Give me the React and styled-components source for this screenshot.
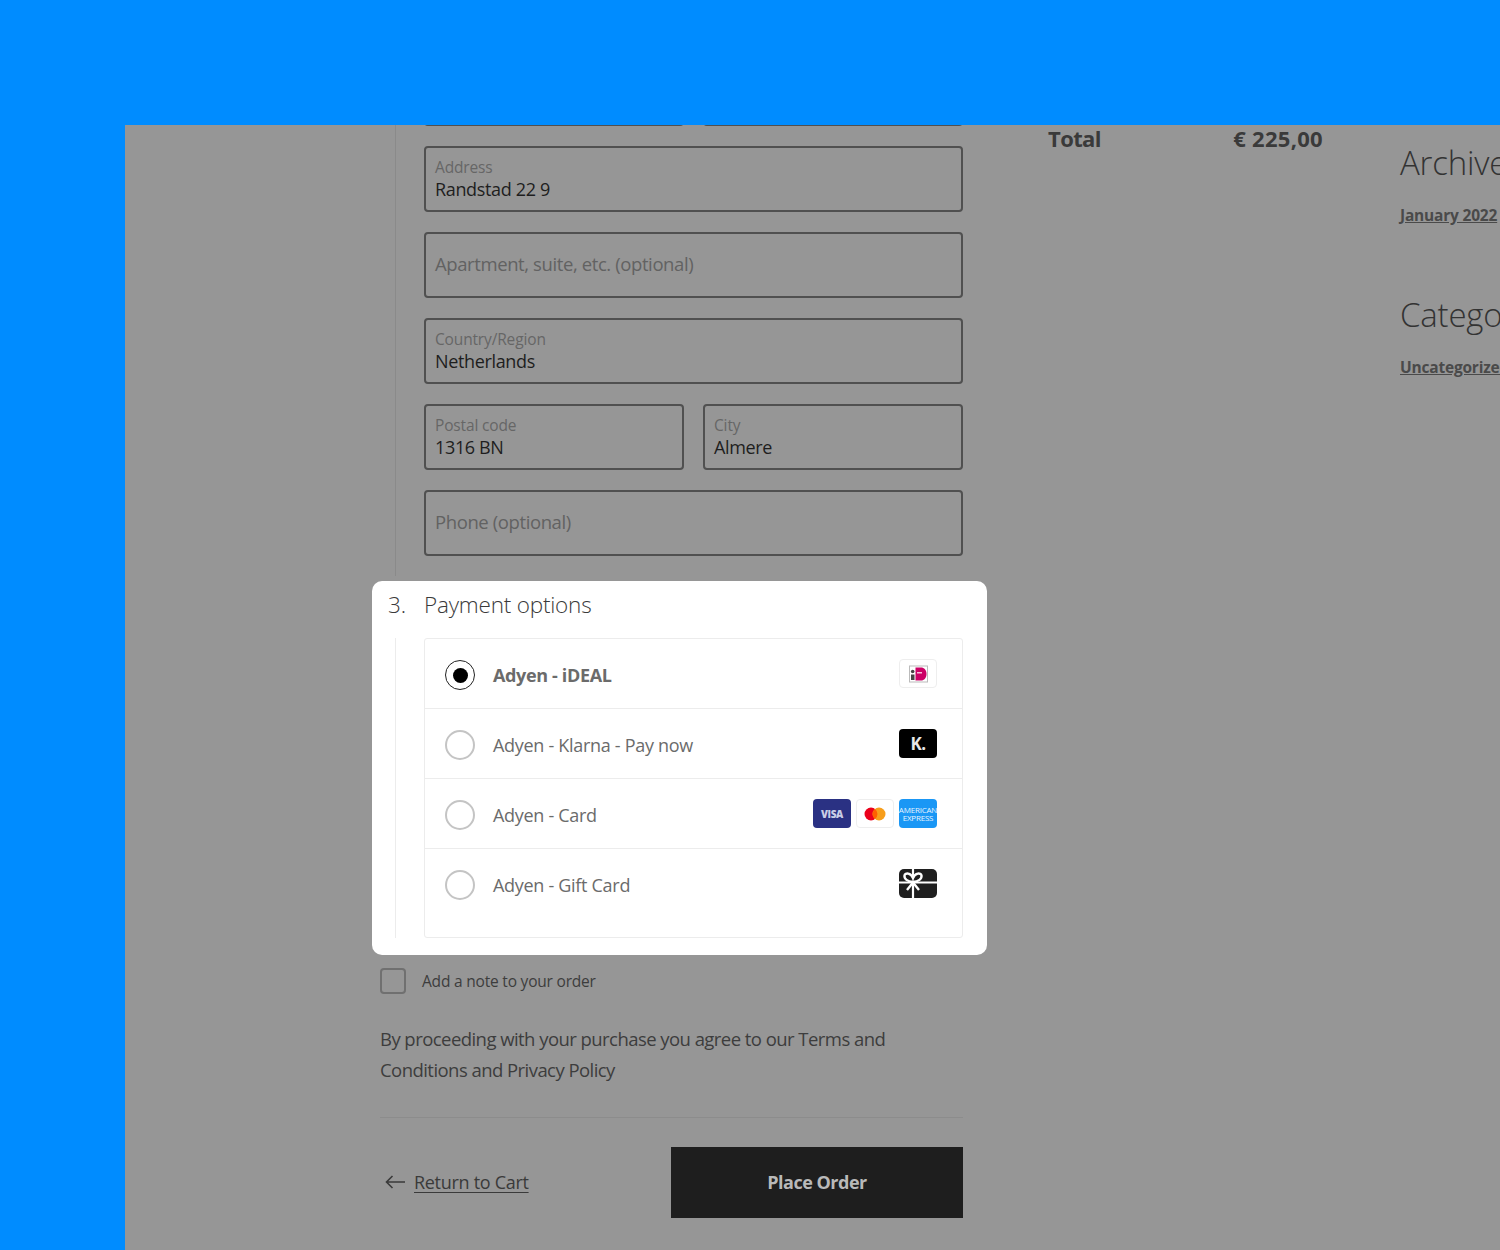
import React from 'react';
import styled, { createGlobalStyle } from 'styled-components';

const GlobalStyle = createGlobalStyle`
  html, body {
    margin: 0;
    padding: 0;
    height: 100%;
    overflow: hidden;
    background: #008cff;
    font-family: "Open Sans", "Noto Sans", sans-serif;
  }
`;

const Backdrop = styled.div`
  height: 1250px;
  padding: 125px 0 0 125px;
  box-sizing: border-box;
  overflow: hidden;
`;

const Sheet = styled.div`
  height: 1125px;
  background: #969696;
  display: flex;
  align-items: flex-start;
  padding-left: 255px;
  overflow: hidden;
`;

const Checkout = styled.div`
  width: 583px;
  flex: none;
  margin-top: -65px;
`;

const Fields = styled.div`
  margin-left: 15px;
  padding: 0 0 20px 28px;
  border-left: 1px solid #8a8a8a;
  display: flex;
  flex-direction: column;
  gap: 20px;
`;

const Row = styled.div`
  display: flex;
  gap: 19px;
`;

const Field = styled.div`
  flex: 1 0 66px;
  height: 66px;
  box-sizing: border-box;
  border: 2px solid #505050;
  border-radius: 4px;
  padding: 0 9px;
  display: flex;
  flex-direction: column;
  justify-content: center;
`;

const FieldLabel = styled.span`
  font-size: 15.5px;
  line-height: 21px;
  letter-spacing: -0.15px;
  color: #666;
`;

const FieldValue = styled.span`
  font-size: 18px;
  line-height: 23px;
  letter-spacing: -0.35px;
  color: #1e1e1e;
`;

const Placeholder = styled.span`
  margin-bottom: 4px;
  font-size: 18.5px;
  letter-spacing: -0.4px;
  color: #626262;
`;

const Panel = styled.section`
  margin: 5px -24px 0 -8px;
  height: 374px;
  box-sizing: border-box;
  padding-right: 24px;
  background: #fff;
  border-radius: 10px;
`;

const PanelHeading = styled.h2`
  margin: 0;
  height: 57px;
  padding: 0 0 11px 16px;
  box-sizing: border-box;
  display: flex;
  align-items: center;
  font-size: 22.5px;
  font-weight: 300;
  letter-spacing: -0.2px;
  color: #3a3a3a;
  span {
    width: 36px;
  }
`;

const PanelBody = styled.div`
  margin-left: 23px;
  padding-left: 28px;
  border-left: 1px solid #ececec;
`;

const Methods = styled.ul`
  list-style: none;
  margin: 0;
  padding: 0;
  border: 1px solid #ececec;
  border-radius: 3px;
`;

const Method = styled.li`
  height: ${p => (p.$last ? '88px' : '70px')};
  box-sizing: border-box;
  display: flex;
  align-items: flex-start;
  padding: 21px 25px 0 20px;
  border-bottom: ${p => (p.$last ? 'none' : '1px solid #ececec')};
`;

const Radio = styled.span`
  width: 30px;
  height: 30px;
  box-sizing: border-box;
  border-radius: 50%;
  border: ${p => (p.$checked ? '1.5px solid #222' : '2px solid #c4c4c4')};
  display: flex;
  align-items: center;
  justify-content: center;
  flex: none;
  &::after {
    content: '';
    display: ${p => (p.$checked ? 'block' : 'none')};
    width: 15px;
    height: 15px;
    border-radius: 50%;
    background: #000;
  }
`;

const MethodName = styled.span`
  margin-left: 18px;
  line-height: 30px;
  flex: 1;
  font-size: 18px;
  letter-spacing: ${p => (p.$active ? '-0.35px' : '-0.3px')};
  font-weight: ${p => (p.$active ? 700 : 400)};
  color: #6b6b6b;
`;

const Badges = styled.div`
  display: flex;
  gap: 5px;
  margin-top: -1px;
`;

const Badge = styled.span`
  width: 38px;
  height: 29px;
  box-sizing: border-box;
  border-radius: 4px;
  background: ${p => p.$bg || '#fff'};
  border: ${p => (p.$bg ? 'none' : '1px solid #eee')};
  color: #fff;
  display: flex;
  align-items: center;
  justify-content: center;
  overflow: hidden;
`;

const KlarnaMark = styled.span`
  font-size: 17px;
  font-weight: 700;
  letter-spacing: -0.5px;
  color: #e8e8e8;
`;

const VisaMark = styled.span`
  font-size: 10px;
  font-weight: 800;
  letter-spacing: -0.4px;
  color: #c9cde6;
`;

const AmexMark = styled.span`
  font-size: 8px;
  line-height: 8px;
  font-weight: 400;
  text-align: center;
  white-space: nowrap;
  letter-spacing: -0.2px;
  color: #e8f5ff;
`;

const NoteRow = styled.label`
  margin-top: 13px;
  display: flex;
  align-items: center;
  gap: 16px;
  font-size: 15.5px;
  letter-spacing: -0.2px;
  color: #3d3d3d;
`;

const Checkbox = styled.span`
  width: 26px;
  height: 26px;
  box-sizing: border-box;
  border: 2px solid #707070;
  border-radius: 4px;
  flex: none;
`;

const Terms = styled.p`
  margin: 29px 0 0;
  font-size: 18.5px;
  line-height: 31px;
  letter-spacing: -0.55px;
  color: #3d3d3d;
  padding-bottom: 32px;
  border-bottom: 1px solid #8c8c8c;
`;

const Actions = styled.div`
  margin-top: 29px;
  display: flex;
  align-items: center;
  justify-content: space-between;
`;

const BackLink = styled.a`
  display: flex;
  align-items: center;
  gap: 9px;
  margin: 0 0 2px 5px;
  font-size: 18px;
  letter-spacing: -0.3px;
  color: #3a3a3a;
  span {
    text-decoration: underline;
    text-underline-offset: 3px;
  }
`;

const PlaceOrder = styled.button`
  width: 292px;
  height: 71px;
  padding: 0 0 2px;
  border: none;
  background: #1e1e1e;
  color: #b9b9b9;
  font-family: inherit;
  font-size: 18px;
  font-weight: 700;
  letter-spacing: -0.5px;
`;

const Summary = styled.div`
  width: 275px;
  margin-left: 85px;
  flex: none;
  display: flex;
  justify-content: space-between;
  font-size: 22px;
  line-height: 26px;
  font-weight: 700;
  letter-spacing: -0.6px;
  color: #3a3a3a;
`;

const Amount = styled.span`
  letter-spacing: 0.3px;
`;

const Sidebar = styled.aside`
  margin-left: 77px;
  padding-top: 18px;
  flex: none;
  width: 300px;
  white-space: nowrap;
`;

const WidgetTitle = styled.h3`
  margin: 0;
  font-size: 33px;
  line-height: 40px;
  font-weight: 300;
  letter-spacing: -0.2px;
  color: #333;
`;

const WidgetLink = styled.a`
  display: block;
  margin: 22px 0 70px;
  font-size: 15.5px;
  line-height: 20px;
  font-weight: 700;
  letter-spacing: -0.2px;
  color: #4a4a4a;
  text-decoration: underline;
`;

const IdealIcon = () => (
  <svg width="19" height="18" viewBox="0 0 19 18">
    <rect x="0.5" y="1" width="18" height="16" fill="#fff" stroke="#bbb" strokeWidth="1" />
    <rect x="2" y="9.500" width="3.500" height="5.500" fill="#444" />
    <circle cx="3.700" cy="6.500" r="1.800" fill="#444" />
    <path d="M6.500 2.500h5.500c3.200 0 5.500 2.400 5.500 6.500s-2.300 6.500-5.500 6.500H6.500z" fill="#cc0066" />
    <path d="M8 7h5v1.500H8z" fill="#f7bcd9" />
  </svg>
);

const GiftIcon = () => (
  <svg width="38" height="29" viewBox="0 0 38 29">
    <rect width="38" height="29" rx="5" fill="#1f1f1f" />
    <path d="M0 13.500h38M14 0v29" stroke="#fff" strokeWidth="2.200" fill="none" />
    <path d="M14 13c-5.500-.5-9-3-8.500-6.500 .5-3 6.500-3 8.500 2.500 2-5.500 8-5.500 8.500-2.500 .5 3.500-3 6-8.500 6.500z" fill="#1f1f1f" stroke="#fff" strokeWidth="2.400" />
    <path d="M14 13.500l-6 7.500M14 13.500l6 7.500" stroke="#fff" strokeWidth="2.400" fill="none" />
  </svg>
);

const ArrowIcon = () => (
  <svg width="20" height="14" viewBox="0 0 20 14">
    <path d="M20 7H1.500M7.500 1L1.500 7l6 6" fill="none" stroke="#3a3a3a" strokeWidth="1.600" />
  </svg>
);

const MastercardIcon = () => (
  <svg width="22" height="14" viewBox="0 0 22 14">
    <circle cx="7" cy="7" r="6.500" fill="#eb001b" />
    <circle cx="15" cy="7" r="6.500" fill="#f79e1b" />
    <path d="M11 1.900a6.500 6.500 0 0 1 0 10.200a6.500 6.500 0 0 1 0-10.200z" fill="#ff5f00" />
  </svg>
);

const App = () => (
  <>
    <GlobalStyle />
    <Backdrop>
      <Sheet>
        <Checkout>
          <Fields>
            <Row>
              <Field />
              <Field />
            </Row>
            <Field>
              <FieldLabel>Address</FieldLabel>
              <FieldValue>Randstad 22 9</FieldValue>
            </Field>
            <Field>
              <Placeholder>Apartment, suite, etc. (optional)</Placeholder>
            </Field>
            <Field>
              <FieldLabel>Country/Region</FieldLabel>
              <FieldValue>Netherlands</FieldValue>
            </Field>
            <Row>
              <Field>
                <FieldLabel>Postal code</FieldLabel>
                <FieldValue>1316 BN</FieldValue>
              </Field>
              <Field>
                <FieldLabel>City</FieldLabel>
                <FieldValue>Almere</FieldValue>
              </Field>
            </Row>
            <Field>
              <Placeholder>Phone (optional)</Placeholder>
            </Field>
          </Fields>

          <Panel>
            <PanelHeading>
              <span>3.</span>
              Payment options
            </PanelHeading>
            <PanelBody>
              <Methods>
                <Method>
                  <Radio $checked />
                  <MethodName $active>Adyen - iDEAL</MethodName>
                  <Badges>
                    <Badge><IdealIcon /></Badge>
                  </Badges>
                </Method>
                <Method>
                  <Radio />
                  <MethodName>Adyen - Klarna - Pay now</MethodName>
                  <Badges>
                    <Badge $bg="#000"><KlarnaMark>K.</KlarnaMark></Badge>
                  </Badges>
                </Method>
                <Method>
                  <Radio />
                  <MethodName>Adyen - Card</MethodName>
                  <Badges>
                    <Badge $bg="#2a3183"><VisaMark>VISA</VisaMark></Badge>
                    <Badge><MastercardIcon /></Badge>
                    <Badge $bg="#1a97f5"><AmexMark>AMERICAN<br />EXPRESS</AmexMark></Badge>
                  </Badges>
                </Method>
                <Method $last>
                  <Radio />
                  <MethodName>Adyen - Gift Card</MethodName>
                  <Badges>
                    <GiftIcon />
                  </Badges>
                </Method>
              </Methods>
            </PanelBody>
          </Panel>

          <NoteRow>
            <Checkbox />
            Add a note to your order
          </NoteRow>
          <Terms>
            By proceeding with your purchase you agree to our Terms and
            <br />
            Conditions and Privacy Policy
          </Terms>
          <Actions>
            <BackLink>
              <ArrowIcon />
              <span>Return to Cart</span>
            </BackLink>
            <PlaceOrder>Place Order</PlaceOrder>
          </Actions>
        </Checkout>

        <Summary>
          <span>Total</span>
          <Amount>€ 225,00</Amount>
        </Summary>

        <Sidebar>
          <WidgetTitle>Archives</WidgetTitle>
          <WidgetLink>January 2022</WidgetLink>
          <WidgetTitle>Categories</WidgetTitle>
          <WidgetLink>Uncategorized</WidgetLink>
        </Sidebar>
      </Sheet>
    </Backdrop>
  </>
);

export default App;
